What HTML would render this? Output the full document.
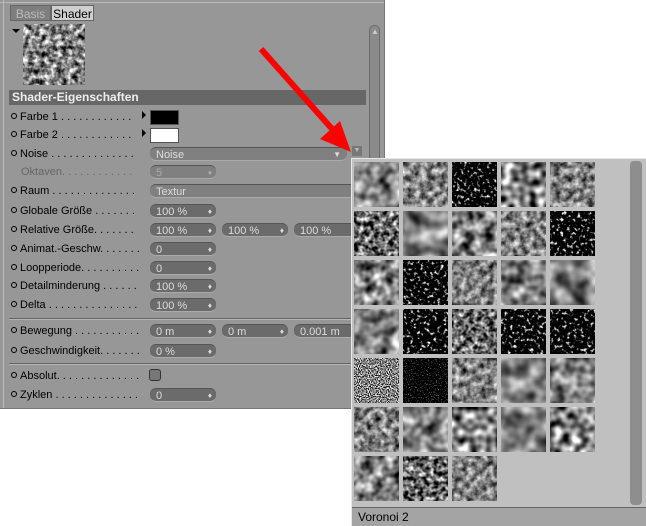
<!DOCTYPE html>
<html><head><style>
body{margin:0;width:646px;height:526px;background:#fff;position:relative;overflow:hidden;font-family:"Liberation Sans",sans-serif;font-size:11px}
.a{position:absolute}
#panel{left:0;top:0;width:384px;height:408px;background:#979797;border-right:1px solid #777;border-bottom:1px solid #777}
.lbl{position:absolute;left:11px;color:#000;white-space:nowrap;font-size:11px;line-height:13px}
.lbl i{font-style:normal;display:inline-block;width:4px;height:4px;border:1px solid #000;border-radius:50%;margin-right:3px;vertical-align:1px}
.fld{position:absolute;height:14px;background:#6b6b6b;border-radius:6px;color:#ddd;font-size:11px;line-height:14px;padding-left:6px;box-sizing:border-box;border-top:1px solid #555;border-bottom:1px solid #aaa}
.fld b{position:absolute;right:4px;top:0;font-weight:normal;font-size:8px;color:#ddd}
.sep{position:absolute;left:9px;width:360px;height:1px;background:#666;border-bottom:1px solid #b5b5b5}
</style></head><body>
<div id="panel" class="a">
 <div class="a" style="left:3px;top:0;width:1px;height:408px;background:#bbb"></div>
 <div class="a" style="left:0;top:2px;width:384px;height:1px;background:#bbb"></div>
 <div class="a" style="left:10px;top:5px;width:41px;height:16px;background:#7e7e7e;color:#bbb;font-size:12px;line-height:16px;text-align:center;border:1px solid #666;box-sizing:border-box">Basis</div>
 <div class="a" style="left:51px;top:5px;width:43px;height:16px;background:#cfcfcf;color:#000;font-size:12px;line-height:16px;text-align:center;border:1px solid #666;box-sizing:border-box">Shader</div>
 <div class="a" style="left:12px;top:29px;width:0;height:0;border-left:4px solid transparent;border-right:4px solid transparent;border-top:4px solid #000"></div>
 <svg class="a" style="left:23px;top:24px" width="62" height="61"><filter id="pv" x="0" y="0" width="1" height="1" color-interpolation-filters="sRGB"><feTurbulence type="fractalNoise" baseFrequency="0.18" numOctaves="3" seed="3"/><feColorMatrix values="1.8 0 0 0 -0.4 1.8 0 0 0 -0.4 1.8 0 0 0 -0.4 0 0 0 0 1"/></filter><rect width="62" height="61" filter="url(#pv)"/></svg>
 <div class="a" style="left:9px;top:90px;width:357px;height:15px;background:#676767;color:#eee;font-weight:bold;font-size:12px;line-height:15px;padding-left:3px;box-sizing:border-box">Shader-Eigenschaften</div>
 <div class="a" style="left:369px;top:25px;width:11px;height:145px;background:#8a8a8a;border-radius:5px;border:1px solid #6a6a6a;box-sizing:border-box"></div>
 <div class="a" style="left:371px;top:27px;color:#ccc;font-size:8px">▲</div>
 <div class="a" style="left:352px;top:146px;width:10px;height:10px;background:#777;color:#bbb;font-size:7px;text-align:center;line-height:10px">▼</div>
</div>

<div class="lbl" style="top:111px"><i></i>Farbe 1 . . . . . . . . . . . .</div>
<div class="a" style="left:142px;top:111px;border-top:4px solid transparent;border-bottom:4px solid transparent;border-left:4px solid #000"></div>
<div class="a" style="left:150px;top:110px;width:29px;height:15px;background:#000;border:1px solid #555;box-sizing:border-box"></div>
<div class="lbl" style="top:129px"><i></i>Farbe 2 . . . . . . . . . . . .</div>
<div class="a" style="left:142px;top:129px;border-top:4px solid transparent;border-bottom:4px solid transparent;border-left:4px solid #000"></div>
<div class="a" style="left:150px;top:128px;width:29px;height:15px;background:#fff;border:1px solid #555;box-sizing:border-box"></div>

<div class="lbl" style="top:148px"><i></i>Noise . . . . . . . . . . . . . .</div>
<div class="fld" style="left:150px;top:147px;width:197px;background:#808080">Noise<b style="right:6px">▼</b></div>
<div class="lbl" style="top:166px;color:#666;left:21px">Oktaven. . . . . . . . . . . .</div>
<div class="fld" style="left:150px;top:165px;width:66px;background:#808080;color:#aaa">5<b style="color:#aaa">♦</b></div>
<div class="lbl" style="top:185px"><i></i>Raum . . . . . . . . . . . . . .</div>
<div class="fld" style="left:150px;top:184px;width:210px;background:#808080">Textur</div>

<div class="lbl" style="top:205px"><i></i>Globale Größe . . . . . . .</div>
<div class="fld" style="left:150px;top:204px;width:66px">100 %<b>♦</b></div>
<div class="lbl" style="top:224px"><i></i>Relative Größe. . . . . . .</div>
<div class="fld" style="left:150px;top:223px;width:66px">100 %<b>♦</b></div>
<div class="fld" style="left:222px;top:223px;width:66px">100 %<b>♦</b></div>
<div class="fld" style="left:294px;top:223px;width:66px">100 %</div>
<div class="lbl" style="top:243px"><i></i>Animat.-Geschw. . . . . . .</div>
<div class="fld" style="left:150px;top:242px;width:66px">0<b>♦</b></div>
<div class="lbl" style="top:262px"><i></i>Loopperiode. . . . . . . . . .</div>
<div class="fld" style="left:150px;top:261px;width:66px">0<b>♦</b></div>
<div class="lbl" style="top:280px"><i></i>Detailminderung . . . . . .</div>
<div class="fld" style="left:150px;top:279px;width:66px">100 %<b>♦</b></div>
<div class="lbl" style="top:299px"><i></i>Delta . . . . . . . . . . . . . . .</div>
<div class="fld" style="left:150px;top:298px;width:66px">100 %<b>♦</b></div>
<div class="sep" style="top:318px"></div>
<div class="lbl" style="top:325px"><i></i>Bewegung . . . . . . . . . . .</div>
<div class="fld" style="left:150px;top:324px;width:66px">0 m<b>♦</b></div>
<div class="fld" style="left:222px;top:324px;width:66px">0 m<b>♦</b></div>
<div class="fld" style="left:294px;top:324px;width:66px">0.001 m</div>
<div class="lbl" style="top:345px"><i></i>Geschwindigkeit. . . . . . .</div>
<div class="fld" style="left:150px;top:344px;width:66px">0 %<b>♦</b></div>
<div class="sep" style="top:363px"></div>
<div class="lbl" style="top:370px"><i></i>Absolut. . . . . . . . . . . . . .</div>
<div class="a" style="left:149px;top:369px;width:12px;height:12px;background:#777;border:1px solid #333;border-radius:3px;box-sizing:border-box"></div>
<div class="lbl" style="top:389px"><i></i>Zyklen . . . . . . . . . . . . . .</div>
<div class="fld" style="left:150px;top:388px;width:66px">0<b>♦</b></div>

<svg class="a" style="left:0;top:0" width="646" height="526">
 <line x1="261" y1="49" x2="333" y2="130" stroke="#f00" stroke-width="6"/>
 <polygon points="351,152 320,139 340,121" fill="#f00"/>
</svg>

<div class="a" style="left:351px;top:158px;width:295px;height:368px;background:#c0c0c0;border-top:1px solid #e8e8e8;border-left:1px solid #e8e8e8;box-sizing:border-box"></div>
<div class="a" style="left:630px;top:161px;width:12px;height:344px;background:#8e8e8e;border-radius:4px"></div>
<div class="a" style="left:352px;top:507px;width:294px;height:19px;background:#a4a4a4;border-top:1px solid #666;font-size:12px;line-height:18px;padding-left:6px;box-sizing:border-box;color:#000">Voronoi 2</div>
<svg class="a" style="left:354px;top:162px" width="245" height="341">
<defs>
<filter id="f1" x="0" y="0" width="1" height="1" color-interpolation-filters="sRGB"><feTurbulence type="fractalNoise" baseFrequency="0.08" numOctaves="2" seed="1"/><feColorMatrix values="1.5 0 0 0 -0.25 1.5 0 0 0 -0.25 1.5 0 0 0 -0.25 0 0 0 0 1"/></filter>
<filter id="f2" x="0" y="0" width="1" height="1" color-interpolation-filters="sRGB"><feTurbulence type="fractalNoise" baseFrequency="0.15" numOctaves="3" seed="2"/><feColorMatrix values="1.3 0 0 0 -0.15 1.3 0 0 0 -0.15 1.3 0 0 0 -0.15 0 0 0 0 1"/></filter>
<filter id="f3" x="0" y="0" width="1" height="1" color-interpolation-filters="sRGB"><feTurbulence type="fractalNoise" baseFrequency="0.3" numOctaves="2" seed="3"/><feColorMatrix values="4 0 0 0 -2.2 4 0 0 0 -2.2 4 0 0 0 -2.2 0 0 0 0 1"/></filter>
<filter id="f4" x="0" y="0" width="1" height="1" color-interpolation-filters="sRGB"><feTurbulence type="fractalNoise" baseFrequency="0.12" numOctaves="1" seed="4"/><feColorMatrix values="2.5 0 0 0 -0.75 2.5 0 0 0 -0.75 2.5 0 0 0 -0.75 0 0 0 0 1"/></filter>
<filter id="f5" x="0" y="0" width="1" height="1" color-interpolation-filters="sRGB"><feTurbulence type="fractalNoise" baseFrequency="0.06" numOctaves="2" seed="5"/><feColorMatrix values="1.3 0 0 0 -0.15 1.3 0 0 0 -0.15 1.3 0 0 0 -0.15 0 0 0 0 1"/></filter>
<filter id="f6" x="0" y="0" width="1" height="1" color-interpolation-filters="sRGB"><feTurbulence type="fractalNoise" baseFrequency="0.2" numOctaves="2" seed="6"/><feColorMatrix values="2 0 0 0 -0.6 2 0 0 0 -0.6 2 0 0 0 -0.6 0 0 0 0 1"/></filter>
<filter id="f7" x="0" y="0" width="1" height="1" color-interpolation-filters="sRGB"><feTurbulence type="fractalNoise" baseFrequency="0.9" numOctaves="1" seed="7"/><feColorMatrix values="4 0 0 0 -1.5 4 0 0 0 -1.5 4 0 0 0 -1.5 0 0 0 0 1"/></filter>
<filter id="f8" x="0" y="0" width="1" height="1" color-interpolation-filters="sRGB"><feTurbulence type="fractalNoise" baseFrequency="0.9" numOctaves="1" seed="8"/><feColorMatrix values="4 0 0 0 -2.4 4 0 0 0 -2.4 4 0 0 0 -2.4 0 0 0 0 1"/></filter>
<filter id="f9" x="0" y="0" width="1" height="1" color-interpolation-filters="sRGB"><feTurbulence type="fractalNoise" baseFrequency="0.1" numOctaves="2" seed="9"/><feColorMatrix values="1.6 0 0 0 -0.3 1.6 0 0 0 -0.3 1.6 0 0 0 -0.3 0 0 0 0 1"/></filter>
</defs>
<g>
<rect x="0" y="0" width="45" height="45" filter="url(#f1)"/>
<rect x="49" y="0" width="45" height="45" filter="url(#f2)"/>
<rect x="98" y="0" width="45" height="45" filter="url(#f3)"/>
<rect x="147" y="0" width="45" height="45" filter="url(#f4)"/>
<rect x="196" y="0" width="45" height="45" filter="url(#f2)"/>
<rect x="0" y="49" width="45" height="45" filter="url(#f6)"/>
<rect x="49" y="49" width="45" height="45" filter="url(#f5)"/>
<rect x="98" y="49" width="45" height="45" filter="url(#f9)"/>
<rect x="147" y="49" width="45" height="45" filter="url(#f2)"/>
<rect x="196" y="49" width="45" height="45" filter="url(#f3)"/>
<rect x="0" y="98" width="45" height="45" filter="url(#f9)"/>
<rect x="49" y="98" width="45" height="45" filter="url(#f3)"/>
<rect x="98" y="98" width="45" height="45" filter="url(#f2)"/>
<rect x="147" y="98" width="45" height="45" filter="url(#f1)"/>
<rect x="196" y="98" width="45" height="45" filter="url(#f5)"/>
<rect x="0" y="147" width="45" height="45" filter="url(#f1)"/>
<rect x="49" y="147" width="45" height="45" filter="url(#f3)"/>
<rect x="98" y="147" width="45" height="45" filter="url(#f6)"/>
<rect x="147" y="147" width="45" height="45" filter="url(#f3)"/>
<rect x="196" y="147" width="45" height="45" filter="url(#f3)"/>
<rect x="0" y="196" width="45" height="45" filter="url(#f7)"/>
<rect x="49" y="196" width="45" height="45" filter="url(#f8)"/>
<rect x="98" y="196" width="45" height="45" filter="url(#f2)"/>
<rect x="147" y="196" width="45" height="45" filter="url(#f5)"/>
<rect x="196" y="196" width="45" height="45" filter="url(#f1)"/>
<rect x="0" y="245" width="45" height="45" filter="url(#f2)"/>
<rect x="49" y="245" width="45" height="45" filter="url(#f1)"/>
<rect x="98" y="245" width="45" height="45" filter="url(#f4)"/>
<rect x="147" y="245" width="45" height="45" filter="url(#f5)"/>
<rect x="196" y="245" width="45" height="45" filter="url(#f4)"/>
<rect x="0" y="294" width="45" height="45" filter="url(#f9)"/>
<rect x="49" y="294" width="45" height="45" filter="url(#f6)"/>
<rect x="98" y="294" width="45" height="45" filter="url(#f2)"/>
</g>
</svg>
</body></html>
